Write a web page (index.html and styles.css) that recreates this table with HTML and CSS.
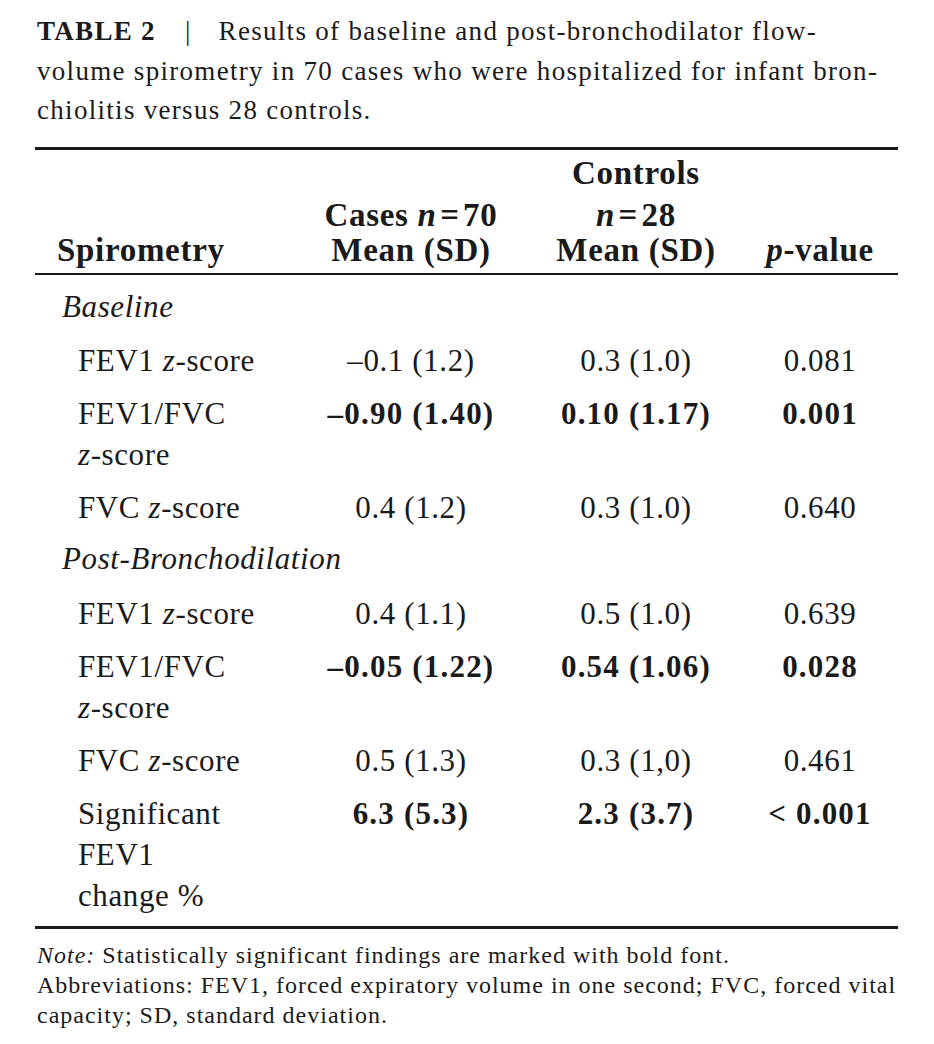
FILE: index.html
```html
<!DOCTYPE html>
<html>
<head>
<meta charset="utf-8">
<link rel="stylesheet" href="styles.css">
</head>
<body>
<div class="page">
  <p class="caption"><span class="cap-label">TABLE 2</span><span class="cap-sep">|</span>Results of baseline and post-bronchodilator flow-<br>volume spirometry in 70 cases who were hospitalized for infant bron-<br>chiolitis versus 28 controls.</p>
  <table class="results">
    <colgroup>
      <col class="c1"><col class="c2"><col class="c3"><col class="c4">
    </colgroup>
    <thead>
      <tr>
        <th class="lbl">Spirometry</th>
        <th>Cases <i>n</i>&#8202;=&#8202;70<br>Mean (SD)</th>
        <th><span class="ctl-top">Controls</span><i>n</i>&#8202;=&#8202;28<br>Mean (SD)</th>
        <th><i>p</i>-value</th>
      </tr>
    </thead>
    <tbody>
      <tr class="section first"><td colspan="4"><i>Baseline</i></td></tr>
      <tr><td class="lbl">FEV1 <i>z</i>-score</td><td>&ndash;0.1 (1.2)</td><td>0.3 (1.0)</td><td>0.081</td></tr>
      <tr class="sig"><td class="lbl">FEV1/FVC<br><i>z</i>-score</td><td>&ndash;0.90 (1.40)</td><td>0.10 (1.17)</td><td>0.001</td></tr>
      <tr><td class="lbl">FVC <i>z</i>-score</td><td>0.4 (1.2)</td><td>0.3 (1.0)</td><td>0.640</td></tr>
      <tr class="section"><td colspan="4"><i>Post-Bronchodilation</i></td></tr>
      <tr><td class="lbl">FEV1 <i>z</i>-score</td><td>0.4 (1.1)</td><td>0.5 (1.0)</td><td>0.639</td></tr>
      <tr class="sig"><td class="lbl">FEV1/FVC<br><i>z</i>-score</td><td>&ndash;0.05 (1.22)</td><td>0.54 (1.06)</td><td>0.028</td></tr>
      <tr><td class="lbl">FVC <i>z</i>-score</td><td>0.5 (1.3)</td><td>0.3 (1,0)</td><td>0.461</td></tr>
      <tr class="sig last"><td class="lbl">Significant<br>FEV1<br>change %</td><td>6.3 (5.3)</td><td>2.3 (3.7)</td><td>&lt; 0.001</td></tr>
    </tbody>
  </table>
  <p class="note"><i>Note:</i> Statistically significant findings are marked with bold font.<br>Abbreviations: FEV1, forced expiratory volume in one second; FVC, forced vital<br>capacity; SD, standard deviation.</p>
</div>
</body>
</html>
```

FILE: styles.css
```css
html, body {
  margin: 0;
  padding: 0;
  background: #ffffff;
}
body {
  font-family: "Liberation Serif", "Times New Roman", serif;
  color: #1a1a1a;
}
.page {
  padding: 12px 36px 0 35px;
  width: 863px;
}
.caption {
  margin: 0 0 0 2px;
  font-size: 27px;
  letter-spacing: 1.3px;
  line-height: 39.5px;
  white-space: nowrap;
}
.cap-label {
  font-weight: bold;
}
.cap-sep {
  display: inline-block;
  margin: 0 27px 0 29px;
}
.results {
  margin-top: 16px;
  width: 863px;
  border-collapse: collapse;
  table-layout: fixed;
  border-top: 3px solid #1a1a1a;
  border-bottom: 3px solid #1a1a1a;
  font-size: 31px;
  letter-spacing: 0.6px;
}
.c1 { width: 257px; }
.c2 { width: 238px; }
.c3 { width: 212px; }
.c4 { width: 156px; }
.results thead th {
  font-size: 33px;
  letter-spacing: 0.7px;
  font-weight: bold;
  text-align: center;
  vertical-align: bottom;
  line-height: 35px;
  padding: 6px 0 5px 0;
  border-bottom: 2px solid #1a1a1a;
  white-space: nowrap;
}
.ctl-top {
  display: block;
  margin-bottom: 7px;
}
.results thead th.lbl {
  text-align: left;
  padding-left: 22px;
}
.results td {
  text-align: center;
  vertical-align: top;
  line-height: 41px;
  padding: 6px 0 6px 0;
  white-space: nowrap;
}
.results td.lbl {
  text-align: left;
  padding-left: 43px;
}
.results tr.section td {
  text-align: left;
  padding: 4px 0 8px 27px;
}
.results tr.section.first td {
  padding-top: 11px;
  padding-bottom: 7px;
}
.results tr.sig td:not(.lbl) {
  font-weight: bold;
  letter-spacing: 1.2px;
}
.results tr.last td {
  padding-bottom: 10px;
}
.note {
  margin: 11px 0 0 2px;
  font-size: 24px;
  letter-spacing: 1px;
  line-height: 30px;
  white-space: nowrap;
}
```
